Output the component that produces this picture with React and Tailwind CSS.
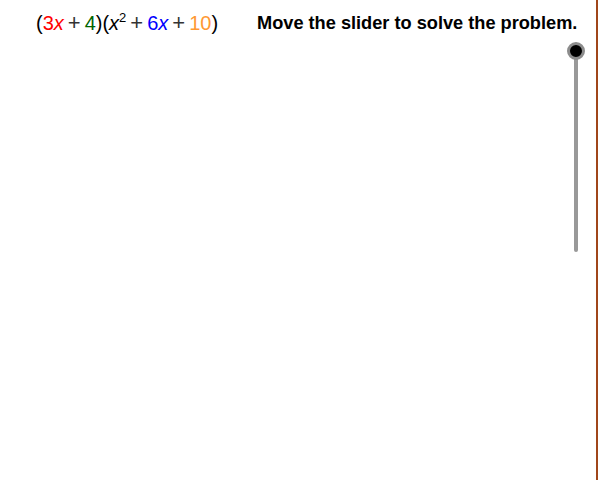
import React from "react";

const Plus = () => <span className="mx-[4px] text-[22px] font-light text-[#333]">+</span>;

const Expression = () => (
  <div className="flex items-baseline text-[20px] text-black leading-none font-['Liberation_Sans',sans-serif]">
    <span>(</span>
    <span className="text-[#ff0000]">3</span>
    <span className="italic text-[#ff0000]">x</span>
    <Plus />
    <span className="text-[#006400]">4</span>
    <span>)(</span>
    <span className="italic">x</span>
    <sup className="text-[13px] -top-[8px]">2</sup>
    <Plus />
    <span className="text-[#0000ff]">6</span>
    <span className="italic text-[#0000ff]">x</span>
    <Plus />
    <span className="text-[#ff9933]">10</span>
    <span>)</span>
  </div>
);

const Slider = () => (
  <div className="self-end mr-[11px] w-[18px] flex justify-center">
    <div className="relative w-[4px] h-[201px] bg-[#999999] rounded-b-sm">
      <div className="absolute -top-[9px] left-1/2 -translate-x-1/2 w-[18px] h-[18px] rounded-full bg-black border-[3px] border-[#8c8c8c]" />
    </div>
  </div>
);

export default function App() {
  return (
    <div className="w-[598px] h-[480px] bg-white border-r-2 border-[#a0461a] flex flex-col">
      <div className="h-[51px] flex items-start pt-[12px]">
        <div className="ml-[36px] w-[221px]">
          <Expression />
        </div>
        <h1 className="text-[18.2px] font-bold text-black leading-none pt-[2px] font-['Liberation_Sans',sans-serif]">
          Move the slider to solve the problem.
        </h1>
      </div>
      <Slider />
    </div>
  );
}
